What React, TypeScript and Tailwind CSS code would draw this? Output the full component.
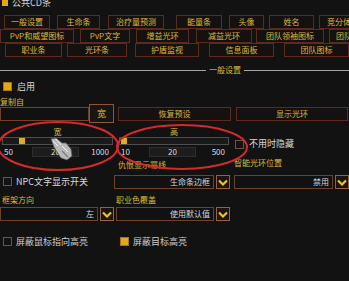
import React from "react";

const gold = "text-[#dcb93a]";

function Tab({ label, ml, w }: { label: string; ml: string; w: string }) {
	return (
		<div
			className={`${ml} ${w} shrink-0 h-[14px] flex items-center justify-center border border-[#5e2a1e] bg-[#151111] text-[8px] leading-none ${gold} whitespace-nowrap overflow-hidden`}
		>
			{label}
		</div>
	);
}

function Check({ on }: { on?: boolean }) {
	return on ? (
		<div className="w-[9px] h-[9px] shrink-0 bg-[#e2a91a] border border-[#a8760e]" />
	) : (
		<div className="w-[9px] h-[9px] shrink-0 border border-[#6a5444] bg-[#141212]" />
	);
}

function Chevron() {
	return (
		<div className="w-[14px] h-[14px] shrink-0 border border-[#9a6236] bg-[#1b1410] flex items-center justify-center">
			<svg width="10" height="7" viewBox="0 0 10 7">
				<path d="M1 1.5 L5 5.5 L9 1.5" fill="none" stroke="#f2c21c" strokeWidth="2.2" />
			</svg>
		</div>
	);
}

function Dropdown({ value, chevron = true }: { value: string; chevron?: boolean }) {
	return (
		<div className="flex items-center gap-[2px]">
			<div className="flex-1 h-[14px] border border-[#6e4128] bg-[#121111] flex items-center justify-end pr-[3px] text-[8px] leading-none text-[#d6d6d6] whitespace-nowrap">
				{value}
			</div>
			{chevron && <Chevron />}
		</div>
	);
}

function Slider({ label, min, max, thumb }: { label: string; min: string; max: string; thumb: string }) {
	return (
		<div className="flex flex-col">
			<div className={`h-[8px] flex items-center justify-center text-[8px] leading-none ${gold}`}>{label}</div>
			<div className="mt-[1px] mx-[2px] h-[8px] border border-[#4e4e4e] bg-[#1a1a1a] flex items-stretch">
				<div className={`${thumb} w-[6px] bg-[#d9b01e]`} />
			</div>
			<div className="mt-[2px] h-[10px] flex items-center text-[8px] leading-none text-[#dcdcdc] px-[4px]">
				<span className="w-[28px]">{min}</span>
				<div className="w-[47px] h-[10px] bg-[#1d1d1d] border border-[#2e2e2e] flex items-center justify-center">20</div>
				<span className="flex-1 text-right pr-[2px]">{max}</span>
			</div>
		</div>
	);
}

export default function App() {
	return (
		<div className="relative w-[349px] h-[281px] overflow-hidden bg-[#121212] font-['Noto_Sans_CJK_SC','Noto_Sans',sans-serif] select-none">
			{/* title, cut at top */}
			<div className="-mt-[4px] h-[12px] flex items-center gap-[4px] pl-[2px]">
				<div className="w-[6px] h-[7px] bg-[#e2a91a]" />
				<span className="text-[9px] leading-none text-[#d6d6d6]">公共CD条</span>
			</div>

			{/* tabs */}
			<div className="mt-[7px] flex flex-col">
				<div className="flex">
					<Tab label="一般设置" ml="ml-[4px]" w="w-[46px]" />
					<Tab label="生命条" ml="ml-[7px]" w="w-[43px]" />
					<Tab label="治疗量预测" ml="ml-[8px]" w="w-[56px]" />
					<Tab label="能量条" ml="ml-[12px]" w="w-[46px]" />
					<Tab label="头像" ml="ml-[7px]" w="w-[35px]" />
					<Tab label="姓名" ml="ml-[5px]" w="w-[45px]" />
					<Tab label="竞分体" ml="ml-[5px]" w="w-[40px]" />
				</div>
				<div className="flex">
					<Tab label="PvP和威望图标" ml="ml-0" w="w-[74px]" />
					<Tab label="PvP文字" ml="ml-[6px]" w="w-[50px]" />
					<Tab label="增益光环" ml="ml-[6px]" w="w-[53px]" />
					<Tab label="减益光环" ml="ml-[7px]" w="w-[56px]" />
					<Tab label="团队领袖图标" ml="ml-[4px]" w="w-[68px]" />
					<Tab label="团队" ml="ml-[5px]" w="w-[30px]" />
				</div>
				<div className="flex">
					<Tab label="职业条" ml="ml-[5px]" w="w-[57px]" />
					<Tab label="光环条" ml="ml-[5px]" w="w-[60px]" />
					<Tab label="护盾监视" ml="ml-[8px]" w="w-[64px]" />
					<Tab label="信息面板" ml="ml-[10px]" w="w-[65px]" />
					<Tab label="团队图标" ml="ml-[10px]" w="w-[65px]" />
				</div>
			</div>

			{/* section header */}
			<div className="mt-[8px] h-[10px] flex items-center">
				<div className="w-[206px] h-px bg-[#a4a4a4]" />
				<span className={`px-[3px] text-[8px] leading-none ${gold}`}>一般设置</span>
				<div className="flex-1 h-px bg-[#a4a4a4]" />
			</div>

			{/* enable */}
			<div className="mt-[7px] h-[9px] flex items-center gap-[5px] pl-[3px]">
				<Check on />
				<span className="text-[9px] leading-none text-[#d8d8d8]">启用</span>
			</div>

			{/* copy from */}
			<div className={`mt-[6px] h-[10px] flex items-center text-[8px] leading-none ${gold}`}>复制自</div>

			<div className="-mt-[3px] grid grid-cols-[114px_115px_115px] gap-x-[2px] items-center">
				<div className="flex items-center">
					<div className="w-[92px] h-[14px] border border-[#6e4128] bg-[#121111]" />
					<div className={`w-[25px] h-[19px] shrink-0 border border-[#8a5a36] bg-[#1a1512] flex items-center justify-center text-[9px] leading-none ${gold}`}>
						宽
					</div>
				</div>
				<div className={`ml-[2px] h-[14px] border border-[#5e2a1e] bg-[#151111] flex items-center justify-center text-[8px] leading-none ${gold}`}>
					恢复预设
				</div>
				<div className={`ml-[3px] h-[14px] border border-[#5e2a1e] bg-[#151111] flex items-center justify-center text-[8px] leading-none ${gold}`}>
					显示光环
				</div>
			</div>

			{/* sliders */}
			<div className="mt-[5px] grid grid-cols-[115px_116px_118px]">
				<Slider label="宽" min="50" max="1000" thumb="ml-[16px]" />
				<div className="pl-[2px]">
					<Slider label="高" min="10" max="500" thumb="ml-[1px]" />
				</div>
				<div className="pl-[4px] pt-[12px] flex items-start gap-[5px]">
					<Check />
					<span className="text-[9px] leading-none text-[#d8d8d8] -mt-[1px]">不用时隐藏</span>
				</div>
			</div>

			{/* row B */}
			<div className="mt-[3px] grid grid-cols-[114px_117px_118px] items-start">
				<div className="pt-[17px] pl-[3px] flex items-center gap-[4px]">
					<Check />
					<span className="text-[9px] leading-none text-[#d8d8d8]">NPC文字显示开关</span>
				</div>
				<div className="pl-[4px]">
					<div className={`h-[10px] flex items-center text-[8px] leading-none ${gold}`}>仇恨显示幂线</div>
					<div className="mt-[5px] -ml-[4px] pl-[0px] pr-[1px]">
						<Dropdown value="生命条边框" />
					</div>
				</div>
				<div className="pl-[3px]">
					<div className={`-mt-[2px] h-[10px] flex items-center text-[8px] leading-none ${gold}`}>智能光环位置</div>
					<div className="mt-[7px]">
						<Dropdown value="禁用" />
					</div>
				</div>
			</div>

			{/* row C */}
			<div className="mt-[6px] grid grid-cols-[114px_117px_118px] items-start">
				<div>
					<div className={`pl-[2px] h-[10px] flex items-center text-[8px] leading-none ${gold}`}>框架方向</div>
					<div className="mt-[2px]">
						<Dropdown value="左" />
					</div>
				</div>
				<div className="pl-[2px]">
					<div className={`h-[10px] flex items-center text-[8px] leading-none ${gold}`}>职业色覆盖</div>
					<div className="mt-[2px] pr-[1px]">
						<Dropdown value="使用默认值" />
					</div>
				</div>
				<div />
			</div>

			{/* row D */}
			<div className="mt-[16px] grid grid-cols-[118px_231px] items-center">
				<div className="pl-[3px] flex items-center gap-[4px]">
					<Check />
					<span className="text-[9px] leading-none text-[#cfcfcf]">屏蔽鼠标指向高亮</span>
				</div>
				<div className="pl-[2px] flex items-center gap-[4px]">
					<Check on />
					<span className="text-[9px] leading-none text-[#cfcfcf]">屏蔽目标高亮</span>
				</div>
			</div>

			{/* annotation overlay: red ellipses + cursor */}
			<svg className="absolute inset-0 pointer-events-none" width="349" height="281" viewBox="0 0 349 281">
				<ellipse cx="58" cy="146" rx="60" ry="24" fill="none" stroke="#d42a2a" strokeWidth="2" />
				<ellipse cx="182" cy="147" rx="65" ry="22" fill="none" stroke="#d42a2a" strokeWidth="2" />
				<g>
					<path
						d="M51 139 L56 138 L62 143 L66 143 L71 149 L72 156 L67 160 L61 158 L57 152 L54 147 Z"
						fill="#b9b9b9"
						stroke="#5c5c5c"
						strokeWidth="0.8"
					/>
					<path d="M53 141 L58 146 M56 139 L61 145 M62 146 L68 152" stroke="#f0f0f0" strokeWidth="1" />
					<path d="M62 151 L68 157" stroke="#7a7a7a" strokeWidth="1.2" />
				</g>
			</svg>
		</div>
	);
}
